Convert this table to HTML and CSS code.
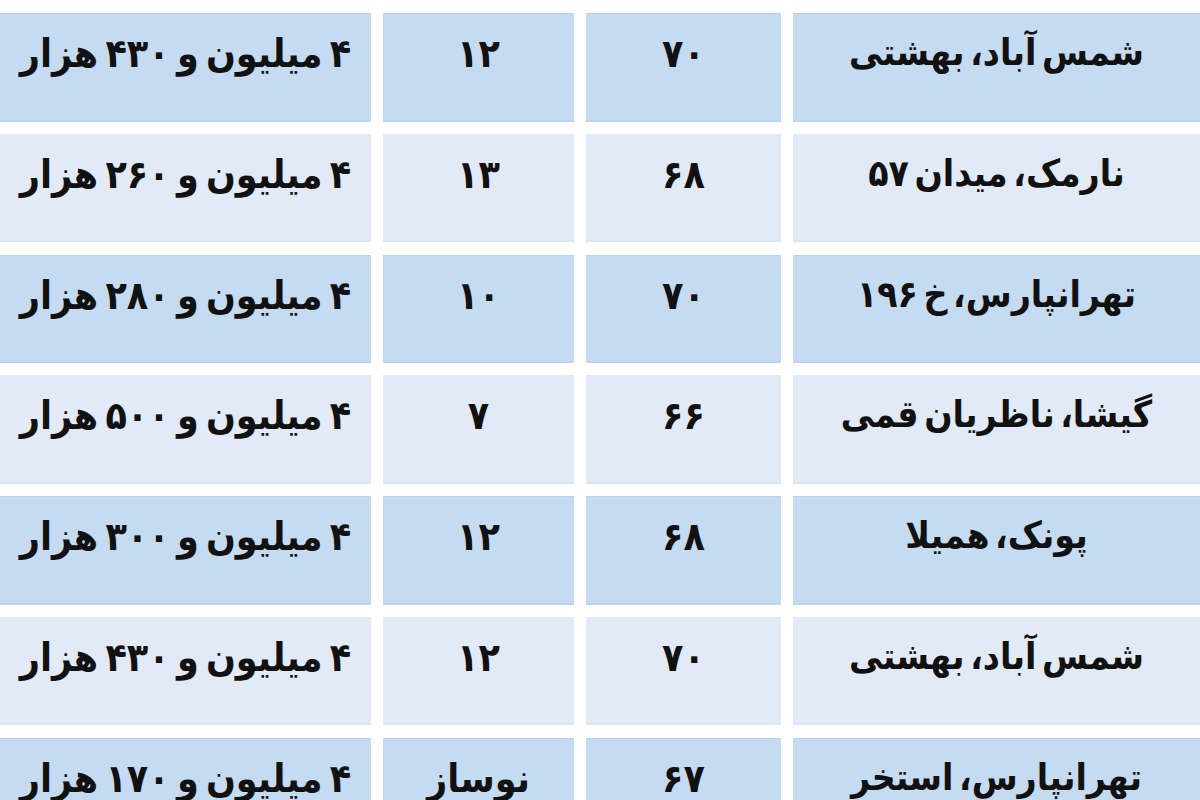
FILE: index.html
```html
<!DOCTYPE html>
<html lang="fa" dir="rtl">
<head>
<meta charset="utf-8">
<link rel="stylesheet" href="styles.css">
</head>
<body>
<div class="table">
  <div class="row dark"><div class="cell loc">شمس آباد، بهشتی</div><div class="cell">۷۰</div><div class="cell">۱۲</div><div class="cell">۴ میلیون و ۴۳۰ هزار</div></div>
  <div class="row light"><div class="cell loc">نارمک، میدان ۵۷</div><div class="cell">۶۸</div><div class="cell">۱۳</div><div class="cell">۴ میلیون و ۲۶۰ هزار</div></div>
  <div class="row dark"><div class="cell loc">تهرانپارس، خ ۱۹۶</div><div class="cell">۷۰</div><div class="cell">۱۰</div><div class="cell">۴ میلیون و ۲۸۰ هزار</div></div>
  <div class="row light"><div class="cell loc">گیشا، ناظریان قمی</div><div class="cell">۶۶</div><div class="cell">۷</div><div class="cell">۴ میلیون و ۵۰۰ هزار</div></div>
  <div class="row dark"><div class="cell loc">پونک، همیلا</div><div class="cell">۶۸</div><div class="cell">۱۲</div><div class="cell">۴ میلیون و ۳۰۰ هزار</div></div>
  <div class="row light"><div class="cell loc">شمس آباد، بهشتی</div><div class="cell">۷۰</div><div class="cell">۱۲</div><div class="cell">۴ میلیون و ۴۳۰ هزار</div></div>
  <div class="row dark"><div class="cell loc">تهرانپارس، استخر</div><div class="cell">۶۷</div><div class="cell">نوساز</div><div class="cell">۴ میلیون و ۱۷۰ هزار</div></div>
</div>
</body>
</html>
```
FILE: styles.css
```css
html, body {
  margin: 0;
  padding: 0;
  background: #ffffff;
  overflow: hidden;
}
body {
  width: 1200px;
  height: 800px;
  font-family: "DejaVu Sans Condensed", "DejaVu Sans", sans-serif;
  font-weight: bold;
  color: #111111;
}
.table {
  direction: rtl;
  display: flex;
  flex-direction: column;
  gap: 12.3px;
  padding-top: 13px;
}
.row {
  display: grid;
  grid-template-columns: 407px 195px 191px 371px;
  column-gap: 12px;
  height: 108.5px;
  flex: none;
}
.cell {
  text-align: center;
  font-size: 39px;
  line-height: 1;
  padding-top: 21px;
  box-sizing: border-box;
  white-space: nowrap;
  word-spacing: -5px;
}
.cell.loc {
  font-size: 37px;
  word-spacing: -6px;
}
.dark .cell {
  background: #c5dbf2;
  box-shadow: inset 0 9px 0 -8px #b9d3ef, inset 0 -2px 0 #bcd5f0;
}
.light .cell {
  background: #e2eaf7;
  box-shadow: inset 0 -2px 0 #dbe5f4;
}
```
